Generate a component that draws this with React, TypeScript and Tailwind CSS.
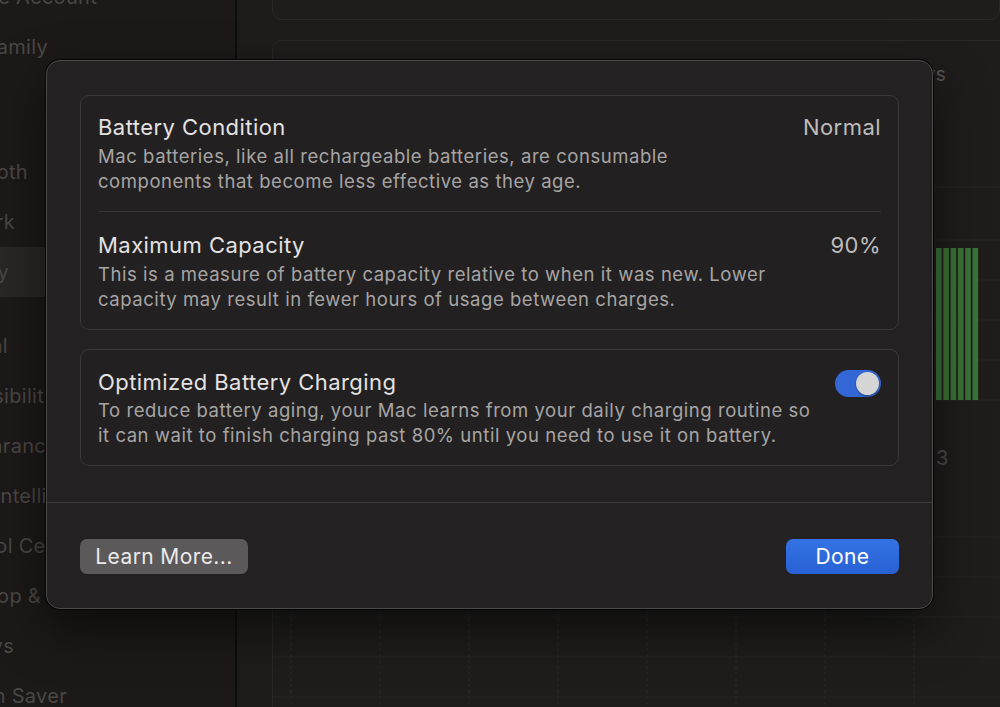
import React from "react";

const font = { fontFamily: "Inter, 'Noto Sans', sans-serif" } as const;

type SideItem = { label: string; end: number; selected?: boolean; spacer?: number };

const sideItems: SideItem[] = [
  { label: "Apple Account", end: 97 },
  { label: "Family", end: 48 },
  { label: "", end: 0, spacer: 25 },
  { label: "Wi-Fi", end: -4 },
  { label: "Bluetooth", end: 28 },
  { label: "Network", end: 15 },
  { label: "Battery", end: 9, selected: true },
  { label: "", end: 0, spacer: 24 },
  { label: "General", end: 8 },
  { label: "Accessibility", end: 56 },
  { label: "Appearance", end: 58 },
  { label: "Apple Intelligence", end: 107 },
  { label: "Control Centre", end: 84 },
  { label: "Desktop & Dock", end: 97 },
  { label: "Displays", end: 14 },
  { label: "Screen Saver", end: 67 },
];

function Sidebar() {
  return (
    <div className="w-[235px] shrink-0 h-full bg-[#1c1918] overflow-hidden">
      <div className="flex flex-col mt-[-28px]">
        {sideItems.map((it, i) =>
          it.spacer ? (
            <div key={i} style={{ height: it.spacer }} />
          ) : (
            <div
              key={i}
              className={`h-[50px] flex items-center ${it.selected ? "bg-[#2a2624]" : ""}`}
            >
              <div className="flex justify-end" style={{ width: Math.max(it.end, 0) }}>
                <span className="whitespace-nowrap text-[20px] tracking-[0.3px] text-[#4b4745] shrink-0">
                  {it.label}
                </span>
              </div>
            </div>
          )
        )}
      </div>
    </div>
  );
}

function Chart1() {
  const bars = [0, 1, 2, 3, 4, 5];
  return (
    <svg width="728" height="310" className="block">
      {[92, 145, 185, 225, 265, 305].map((y) => (
        <line key={y} x1="0" x2="728" y1={y} y2={y} stroke="#272625" strokeWidth="1" />
      ))}
      {bars.map((b) => (
        <rect key={b} x={663 + b * 7.3} y={153} width={5.6} height={152} fill="#3b7337" />
      ))}
    </svg>
  );
}

function Chart2() {
  const xs = [18, 107, 196, 285, 374, 463, 552, 641];
  return (
    <svg width="728" height="200" className="block">
      {[27, 67, 107, 147, 187].map((y) => (
        <line key={y} x1="0" x2="728" y1={y} y2={y} stroke="#272625" strokeWidth="1" />
      ))}
      {xs.map((x) => (
        <line key={x} x1={x} x2={x} y1="0" y2="200" stroke="#2a2928" strokeWidth="1" strokeDasharray="3 3" />
      ))}
    </svg>
  );
}

function Main() {
  return (
    <div className="flex-1 h-full bg-[#1d1c1b] border-l-2 border-[#0e0d0d] pl-[35px] overflow-hidden">
      <div className="mt-[-30px] h-[50px] rounded-[10px] border border-[#292827] bg-[#1e1d1c]" />
      <div className="mt-[20px] h-[700px] rounded-l-[10px] border border-r-0 border-[#292827] bg-[#1e1d1c] flex flex-col">
        <div className="h-[54px] pt-[14px] flex items-center">
          <div className="w-[673px] flex justify-end">
            <span className="whitespace-nowrap text-[19px] tracking-[0.3px] text-[#5a5756] shrink-0">
              Last 10 Days
            </span>
          </div>
        </div>
        <Chart1 />
        <div className="h-[105px] flex items-center pl-[663px]">
          <span className="text-[20px] text-[#4f4c4b]">3</span>
        </div>
        <Chart2 />
      </div>
    </div>
  );
}

function Toggle() {
  return (
    <div className="w-[46px] h-[27px] rounded-full bg-[#3467d6] flex items-center justify-end px-[2px] shrink-0">
      <div className="w-[23px] h-[23px] rounded-full bg-[#d7d6d6] shadow-[0_1px_2px_rgba(0,0,0,0.4)]" />
    </div>
  );
}

const titleCls = "text-[22px] leading-[24px] tracking-[0.45px] text-[#e4e2e2]";
const valueCls = "text-[22px] leading-[24px] tracking-[0.45px] text-[#bebcbb]";
const descCls = "text-[18.5px] leading-[25px] tracking-[0.55px] text-[#a7a5a4]";

function Dialog() {
  return (
    <div className="absolute left-[46px] top-[60px] w-[887px] h-[549px] rounded-[14px] bg-[#232122] border border-[#4c4a4a] shadow-[0_0_0_1px_rgba(0,0,0,0.7),0_20px_50px_rgba(0,0,0,0.55)] flex flex-col">
      <div className="px-[33px] pt-[34px] flex flex-col gap-[19px]">
        <div className="rounded-[9px] border border-[#3a3838] bg-[#222021] px-[17px]">
          <div className="pt-[19px] pb-[17px] flex justify-between">
            <div>
              <div className={titleCls}>Battery Condition</div>
              <div className={`mt-[5px] ${descCls}`}>
                Mac batteries, like all rechargeable batteries, are consumable
                <br />
                components that become less effective as they age.
              </div>
            </div>
            <div className={valueCls}>Normal</div>
          </div>
          <div className="h-px bg-[#363434]" />
          <div className="pt-[21px] pb-[17px] flex justify-between">
            <div>
              <div className={titleCls}>Maximum Capacity</div>
              <div className={`mt-[5px] ${descCls}`}>
                This is a measure of battery capacity relative to when it was new. Lower
                <br />
                capacity may result in fewer hours of usage between charges.
              </div>
            </div>
            <div className={valueCls}>90%</div>
          </div>
        </div>
        <div className="rounded-[9px] border border-[#3a3838] bg-[#222021] px-[17px] pt-[20px] pb-[17px] flex justify-between">
          <div>
            <div className={titleCls}>Optimized Battery Charging</div>
            <div className={`mt-[4px] ${descCls}`}>
              To reduce battery aging, your Mac learns from your daily charging routine so
              <br />
              it can wait to finish charging past 80% until you need to use it on battery.
            </div>
          </div>
          <Toggle />
        </div>
      </div>
      <div className="mt-[36px] h-px bg-[#3b3939]" />
      <div className="px-[33px] pt-[36px] flex justify-between">
        <button className="h-[35px] w-[168px] rounded-[7px] bg-[#5b5959] text-[21px] tracking-[0.4px] text-[#ebeaea] flex items-center justify-center">
          Learn More...
        </button>
        <button className="h-[35px] w-[113px] rounded-[7px] bg-gradient-to-b from-[#3472e3] to-[#2862d4] text-[21px] tracking-[0.4px] text-white flex items-center justify-center">
          Done
        </button>
      </div>
    </div>
  );
}

export default function App() {
  return (
    <div className="relative w-[1000px] h-[707px] overflow-hidden flex" style={font}>
      <Sidebar />
      <Main />
      <Dialog />
    </div>
  );
}
